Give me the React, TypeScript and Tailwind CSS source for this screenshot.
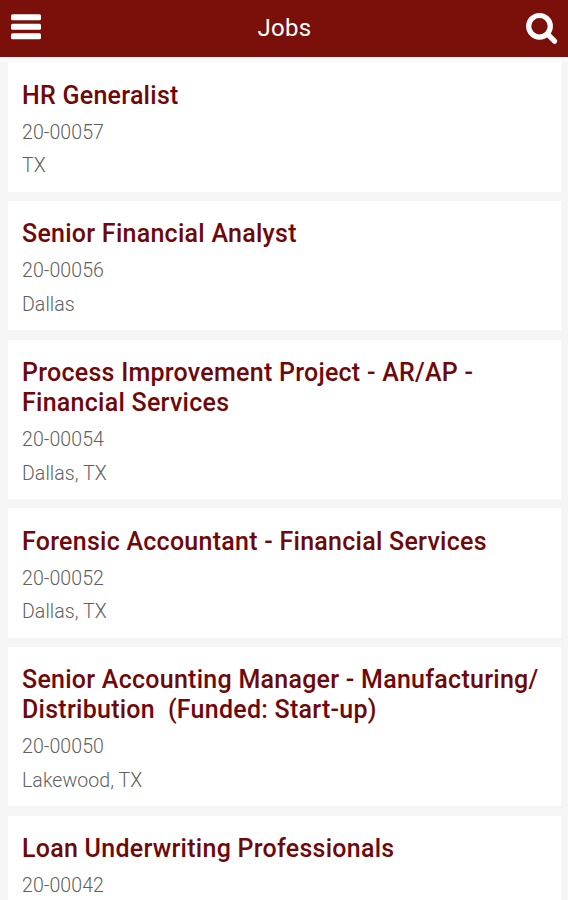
interface Job {
  id: string
  title: string[]
  location?: string
}

const jobs: Job[] = [
  { id: '20-00057', title: ['HR Generalist'], location: 'TX' },
  { id: '20-00056', title: ['Senior Financial Analyst'], location: 'Dallas' },
  { id: '20-00054', title: ['Process Improvement Project - AR/AP -', 'Financial Services'], location: 'Dallas, TX' },
  { id: '20-00052', title: ['Forensic Accountant - Financial Services'], location: 'Dallas, TX' },
  { id: '20-00050', title: ['Senior Accounting Manager - Manufacturing/', 'Distribution  (Funded: Start-up)'], location: 'Lakewood, TX' },
  { id: '20-00042', title: ['Loan Underwriting Professionals'] },
]

function MenuIcon() {
  return (
    <svg width="30" height="26" viewBox="0 0 30 26" fill="currentColor">
      <rect y="0.3" width="30" height="6" rx="1.5" />
      <rect y="9.8" width="30" height="6" rx="1.5" />
      <rect y="19.3" width="30" height="6" rx="1.5" />
    </svg>
  )
}

function SearchIcon() {
  return (
    <svg width="34" height="34" viewBox="0 0 34 34" fill="none" stroke="currentColor">
      <circle cx="14.5" cy="14.3" r="10.8" strokeWidth="5.2" />
      <path d="M22.5 22.2L29.6 29.2" strokeWidth="5.2" strokeLinecap="round" />
    </svg>
  )
}

function Header() {
  return (
    <header className="flex h-[57px] shrink-0 items-center justify-between bg-[#7b100b] pr-[9px] pl-[11px] text-white">
      <button aria-label="Menu" className="mb-[3px]">
        <MenuIcon />
      </button>
      <h1 className="mb-px ml-[3px] text-[24px] tracking-[0.3px]">Jobs</h1>
      <button aria-label="Search">
        <SearchIcon />
      </button>
    </header>
  )
}

function JobCard({ job }: { job: Job }) {
  return (
    <article className="shrink-0 bg-white px-[14px] pt-[18.2px] pb-[8.4px]">
      <h2 className="text-[25px] leading-[30px] font-medium tracking-[0.26px] text-[#6f0808]">
        {job.title.map((line) => (
          <span key={line} className="block whitespace-pre">
            {line}
          </span>
        ))}
      </h2>
      <div className="mt-[5.2px] text-[19.5px] leading-[33.7px] font-light tracking-[0.08px] text-[#606060]">
        <p>{job.id}</p>
        {job.location && <p>{job.location}</p>}
      </div>
    </article>
  )
}

export default function App() {
  return (
    <div className="flex h-screen flex-col overflow-hidden bg-[#f5f5f5] font-['Roboto',sans-serif]">
      <Header />
      <div className="h-[5px] shrink-0 bg-[#fafafa]" />
      <main className="flex min-h-0 flex-1 flex-col gap-[9.5px] overflow-hidden pt-[0.4px] pr-[7px] pl-[8px]">
        {jobs.map((job) => (
          <JobCard key={job.id} job={job} />
        ))}
      </main>
    </div>
  )
}
